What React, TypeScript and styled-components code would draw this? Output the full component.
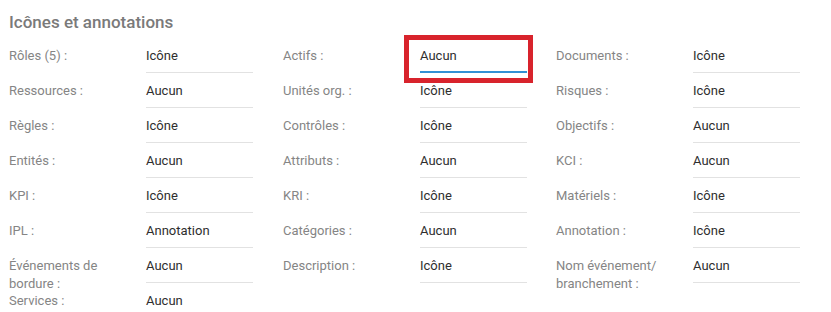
import React from "react";
import styled, { createGlobalStyle } from "styled-components";

const GlobalStyle = createGlobalStyle`
  html, body {
    margin: 0;
    padding: 0;
    background: #ffffff;
    font-family: Roboto, "Liberation Sans", Arial, sans-serif;
  }
`;

const Panel = styled.section`
  padding: 11px 0 0 9px;
  width: 831px;
  height: 312px;
  box-sizing: border-box;
  overflow: hidden;
`;

const Title = styled.h2`
  margin: 0 0 16px 0;
  font-size: 17px;
  line-height: 20px;
  font-weight: 500;
  color: #7a7a7a;
  padding-top: 1px;
  height: 19px;
`;

const Grid = styled.div`
  display: grid;
  grid-template-columns: 274px 273px 273px;
  grid-auto-rows: 35px;
`;

const Field = styled.div`
  display: grid;
  grid-template-columns: 137px 107px;
  align-items: start;
  position: relative;
`;

const Label = styled.div`
  font-size: 13px;
  line-height: 18px;
  color: #858585;
  padding-right: 8px;
`;

const Value = styled.div<{ $focused?: boolean }>`
  position: relative;
  font-size: 13px;
  line-height: 18px;
  color: #2e2e2e;
  padding-bottom: ${(p) => (p.$focused ? "6px" : "7px")};
  border-bottom: ${(p) => (p.$focused ? "2px solid #3290d4" : "1px solid #e2e2e2")};
`;

const Highlight = styled.div`
  position: absolute;
  left: -16px;
  top: -12px;
  width: 129px;
  height: 48px;
  box-sizing: border-box;
  border: 5px solid #d8232c;
  pointer-events: none;
`;

type Item = { label: string; value: string; focused?: boolean };

const items: Item[] = [
  { label: "Rôles (5) :", value: "Icône" },
  { label: "Actifs :", value: "Aucun", focused: true },
  { label: "Documents :", value: "Icône" },
  { label: "Ressources :", value: "Aucun" },
  { label: "Unités org. :", value: "Icône" },
  { label: "Risques :", value: "Icône" },
  { label: "Règles :", value: "Icône" },
  { label: "Contrôles :", value: "Icône" },
  { label: "Objectifs :", value: "Aucun" },
  { label: "Entités :", value: "Aucun" },
  { label: "Attributs :", value: "Aucun" },
  { label: "KCI :", value: "Aucun" },
  { label: "KPI :", value: "Icône" },
  { label: "KRI :", value: "Icône" },
  { label: "Matériels :", value: "Icône" },
  { label: "IPL :", value: "Annotation" },
  { label: "Catégories :", value: "Aucun" },
  { label: "Annotation :", value: "Icône" },
  { label: "Événements de bordure :", value: "Aucun" },
  { label: "Description :", value: "Icône" },
  { label: "Nom événement/ branchement :", value: "Aucun" },
  { label: "Services :", value: "Aucun" },
];

export default function App() {
  return (
    <>
      <GlobalStyle />
      <Panel>
        <Title>Icônes et annotations</Title>
        <Grid>
          {items.map((it) => (
            <Field key={it.label}>
              <Label>{it.label}</Label>
              <Value $focused={it.focused}>
                {it.value}
                {it.focused && <Highlight />}
              </Value>
            </Field>
          ))}
        </Grid>
      </Panel>
    </>
  );
}
